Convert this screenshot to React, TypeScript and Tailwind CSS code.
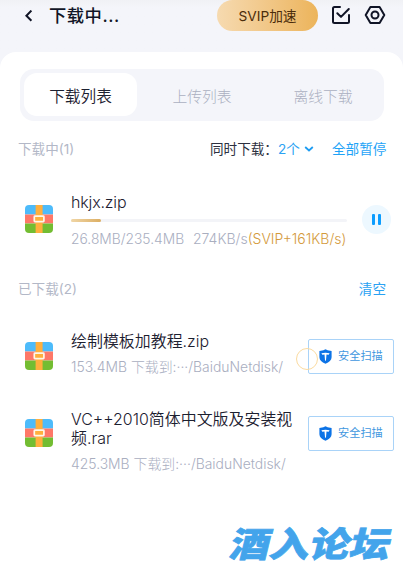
import { clsx } from 'clsx';

const tabs = ['下载列表', '上传列表', '离线下载'];

const finished = [
  {
    lines: ['绘制模板加教程.zip'],
    size: '153.4MB',
    row: 'mt-[33px]',
    icon: 'mt-[10px]',
    side: 'mt-[7px]',
  },
  {
    lines: ['VC++2010简体中文版及安装视', '频.rar'],
    size: '425.3MB',
    row: 'mt-[34px]',
    icon: 'mt-[9px]',
    side: 'mt-[6px]',
  },
];

function ArchiveIcon() {
  return (
    <svg width="28" height="28" viewBox="0 0 28 28" className="shrink-0">
      <path d="M0 9.5V4a4 4 0 0 1 4-4h20a4 4 0 0 1 4 4v5.5z" fill="#4dbbfa" />
      <path d="M0 9.5h28v9H0z" fill="#fe7868" />
      <path d="M0 18.5h28V24a4 4 0 0 1-4 4H4a4 4 0 0 1-4-4z" fill="#73bd32" />
      <path d="M10.6 0h7v28h-7z" fill="#ffaf3d" />
      <rect x="9.3" y="11.1" width="9.6" height="5.6" rx="0.6" fill="#ffaf3d" stroke="#fff7e9" strokeWidth="1.7" />
    </svg>
  );
}

function ShieldIcon() {
  return (
    <svg width="13" height="15" viewBox="0 0 13 15" className="shrink-0">
      <path d="M6.5 0.2 8.6 1.3l4 .6v6.3c0 3-2.4 5.1-6.1 6.6C2.8 13.3.4 11.2.4 8.2V1.9l4-.6z" fill="#0c73e6" />
      <path d="M2.4 4.3c2.7-.9 5.5-.9 8.2 0l-.9 1.5-2.2-.3-.5 5.8-.5.7-.5-.7-.5-5.8-2.2.3z" fill="#fff" />
    </svg>
  );
}

function ScanButton() {
  return (
    <button className="flex h-[35px] w-[86px] items-center rounded-[2px] border border-[#a9d3f8] pl-[10px] text-[11.2px] whitespace-nowrap text-[#3f97e0]">
      <ShieldIcon />
      <span className="ml-[6px]">安全扫描</span>
    </button>
  );
}

export default function App() {
  return (
    <div className="relative flex h-[587px] w-[403px] flex-col overflow-hidden bg-[#f4f5fa] font-['Inter','Noto_Sans_CJK_SC',sans-serif] text-[#1c2030]">
      {/* Top bar */}
      <header className="flex h-[52px] shrink-0 items-start bg-gradient-to-b from-[#f0f1f5] to-[#f4f5fa] to-15%">
        <svg width="10" height="12" viewBox="0 0 10 12" className="mt-[10px] ml-6" fill="none" stroke="#111526" strokeWidth="2">
          <path d="M7.4.6 2.4 5.7l5 5.1" />
        </svg>
        <h1 className="ml-[15px] w-[168px] text-[17.3px] leading-8 font-medium tracking-[0.03em] text-[#111526]">下载中...</h1>
        <button className="h-[31px] w-[101px] rounded-full bg-gradient-to-r from-[#f6dab0] to-[#ecb45a] text-[13.7px] leading-[32px] text-[#4b2c0a]">
          SVIP加速
        </button>
        <svg width="20" height="20" viewBox="0 0 20 20" className="mt-[5px] ml-[13px]" fill="none" stroke="#101426" strokeWidth="2" strokeLinecap="round" strokeLinejoin="round">
          <path d="M9 2H3.5A1.5 1.5 0 0 0 2 3.5v13A1.5 1.5 0 0 0 3.5 18h13a1.5 1.5 0 0 0 1.5-1.5V10M6.3 8.2l3.7 3.7L17.8 4" />
        </svg>
        <svg width="22" height="20" viewBox="0 0 22 20" className="mt-[5px] ml-[13px]" fill="none" stroke="#101426" strokeWidth="2" strokeLinejoin="round">
          <path d="M6.4 2h9.2L20.3 10l-4.7 8H6.4L1.7 10z" />
          <circle cx="11" cy="10" r="3.5" />
        </svg>
      </header>

      <main className="flex-1 rounded-t-[16px] bg-white pt-[17px]">
        {/* Tabs */}
        <nav className="ml-5 flex h-[52px] w-[364px] rounded-[14px] bg-[#f4f5fa] p-1">
          {tabs.map((tab, i) => (
            <button
              key={tab}
              className={clsx(
                'pt-1 whitespace-nowrap',
                i === 0 && 'h-[43px] w-[113px] rounded-[13px] bg-white text-[15.7px] font-[350] text-[#1c2030]',
                i === 1 && 'w-[130px] text-[14.8px] font-light text-[#abb0c1]',
                i === 2 && 'w-[112px] text-[14.8px] font-light text-[#abb0c1]',
              )}
            >
              {tab}
            </button>
          ))}
        </nav>

        {/* Active downloads */}
        <div className="mt-[18px] flex h-5 items-center pl-[18px] text-[13.6px] whitespace-nowrap">
          <span className="w-[192px] text-[#b3b8c7]">下载中(1)</span>
          <span className="w-[68px] text-[#2c3040]">同时下载：</span>
          <span className="w-[26px] text-[#2aa2f3]">2个</span>
          <svg width="10" height="6" viewBox="0 0 10 6" fill="none" stroke="#1d9cf2" strokeWidth="1.8">
            <path d="m1.2 1 3.8 3.500L8.8 1" />
          </svg>
          <button className="ml-[18px] text-[#1ea3f7]">全部暂停</button>
        </div>

        <div className="mt-[31px] flex h-[58px] items-center pl-[24.5px]">
          <ArchiveIcon />
          <div className="ml-[18.5px] w-[276px] pt-px whitespace-nowrap">
            <p className="text-[16px] leading-[22px] font-light tracking-[-0.01em]">hkjx.zip</p>
            <div className="mt-[6px] h-[3px] rounded-full bg-[#f3f4f8]">
              <div className="h-full w-[30px] rounded-full bg-gradient-to-r from-[#f0d6a6] to-[#dcae62]" />
            </div>
            <p className="mt-[7px] flex text-[14px] leading-5 font-light text-[#a9aebf]">
              <span className="w-[122px] text-[13.8px]">26.8MB/235.4MB</span>
              <span>274KB/s</span>
              <span className="text-[#d49a3c]">(SVIP+161KB/s)</span>
            </p>
          </div>
          <button className="ml-[15px] flex size-[29px] items-center justify-center gap-[3px] rounded-full bg-[#edf8ff]">
            <span className="h-[11px] w-[3px] rounded-[1px] bg-[#0c9dff]" />
            <span className="h-[11px] w-[3px] rounded-[1px] bg-[#0c9dff]" />
          </button>
        </div>

        {/* Finished downloads */}
        <div className="mt-[31px] flex h-5 items-center justify-between pr-[17px] pl-[18px] text-[13.6px]">
          <span className="text-[#b3b8c7]">已下载(2)</span>
          <button className="text-[#2aa2f3]">清空</button>
        </div>
        {finished.map((file) => (
          <div key={file.size} className={clsx('flex items-start pl-[24.5px]', file.row)}>
            <div className={file.icon}>
              <ArchiveIcon />
            </div>
            <div className="ml-[18.5px] w-[237px] whitespace-nowrap">
              {file.lines.map((line) => (
                <p key={line} className="text-[15.95px] leading-[19px] font-[350]">{line}</p>
              ))}
              <p className="mt-[7px] text-[13.9px] leading-[18px] font-light text-[#a9aebf]">
                {file.size} 下载到:···/BaiduNetdisk/
              </p>
            </div>
            <div className={file.side}>
              <ScanButton />
            </div>
          </div>
        ))}
      </main>

      {/* Touch indicator */}
      <div className="absolute top-[348px] left-[296px] size-[22px] rounded-full border-[1.5px] border-[#fbdba0]" />

      <div className="absolute top-[522px] left-[231px] origin-center -skew-x-12 scale-y-[0.87] text-[40px] leading-[46px] font-black whitespace-nowrap text-[#43a4eb] [-webkit-text-stroke:0.8px_#43a4eb]">
        酒入论坛
      </div>
    </div>
  );
}
